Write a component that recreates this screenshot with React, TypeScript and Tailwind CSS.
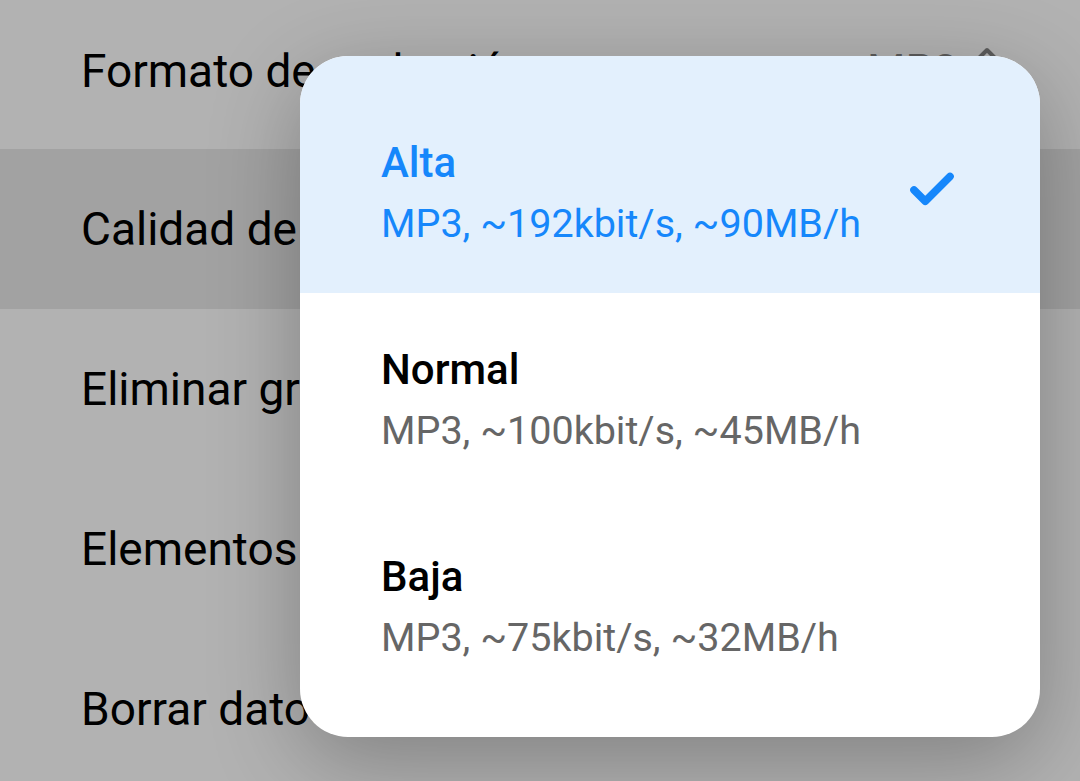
import { Check } from 'lucide-react';

const settings = [
  { label: 'Formato de grabación', value: 'MP3', h: 'h-[149px] pb-[8px]' },
  { label: 'Calidad de grabación', value: '', h: 'h-[160px]', active: true },
  { label: 'Eliminar grabaciones', value: '', h: 'h-[160px]' },
  { label: 'Elementos eliminados', value: '', h: 'h-[160px]' },
  { label: 'Borrar datos', value: '', h: 'h-[160px]' },
];

const options = [
  { title: 'Alta', detail: 'MP3, ~192kbit/s, ~90MB/h', selected: true },
  { title: 'Normal', detail: 'MP3, ~100kbit/s, ~45MB/h' },
  { title: 'Baja', detail: 'MP3, ~75kbit/s, ~32MB/h' },
];

export default function App() {
  return (
    <div
      className="relative w-[1080px] h-[781px] overflow-hidden bg-[#b2b2b2] text-black"
      style={{ fontFamily: 'Roboto, "Noto Sans", sans-serif' }}
    >
      {/* settings list behind the dim layer */}
      <div className="flex flex-col">
        {settings.map((s) => (
          <div
            key={s.label}
            className={`flex items-center justify-between pl-[81px] pr-[80px] shrink-0 ${s.h} ${
              s.active ? 'bg-[#a2a2a2]' : ''
            }`}
          >
            <span className="text-[46px] leading-none whitespace-nowrap">{s.label}</span>
            {s.value && (
              <span className="flex items-center gap-4 text-[44px] leading-none text-[#5c5c5c]">
                {s.value}
                <svg width="26" height="48" viewBox="0 0 26 48" fill="none" stroke="#5c5c5c" strokeWidth="4" strokeLinecap="round" strokeLinejoin="round">
                  <path d="M3 13 L13 3 L23 13" />
                  <path d="M3 35 L13 45 L23 35" />
                </svg>
              </span>
            )}
          </div>
        ))}
      </div>

      {/* quality popup */}
      <div className="absolute left-[300px] top-[56px] w-[740px] h-[681px] rounded-[48px] bg-white overflow-hidden shadow-[0_24px_90px_rgba(0,0,0,0.28)] flex flex-col">
        {options.map((o, i) => (
          <div
            key={o.title}
            className={`flex items-center justify-between pl-[81px] pr-[81px] shrink-0 ${
              i === 0 ? 'h-[237px] pt-[38px] bg-[#e3f0fd]' : i === 2 ? 'h-[237px] pb-[22px]' : 'h-[207px] pt-[8px]'
            }`}
          >
            <div className="flex flex-col gap-[17px]">
              <span
                className={`text-[42px] leading-[44px] font-medium ${
                  o.selected ? 'text-[#1687fb]' : 'text-black'
                }`}
              >
                {o.title}
              </span>
              <span
                className={`text-[39.5px] leading-[44px] whitespace-nowrap ${
                  o.selected ? 'text-[#1687fb]' : 'text-[#666666]'
                }`}
              >
                {o.detail}
              </span>
            </div>
            {o.selected && (
              <Check className="w-[54px] h-[54px] -mt-[8px] text-[#1687fb]" strokeWidth={3.4} />
            )}
          </div>
        ))}
      </div>
    </div>
  );
}
